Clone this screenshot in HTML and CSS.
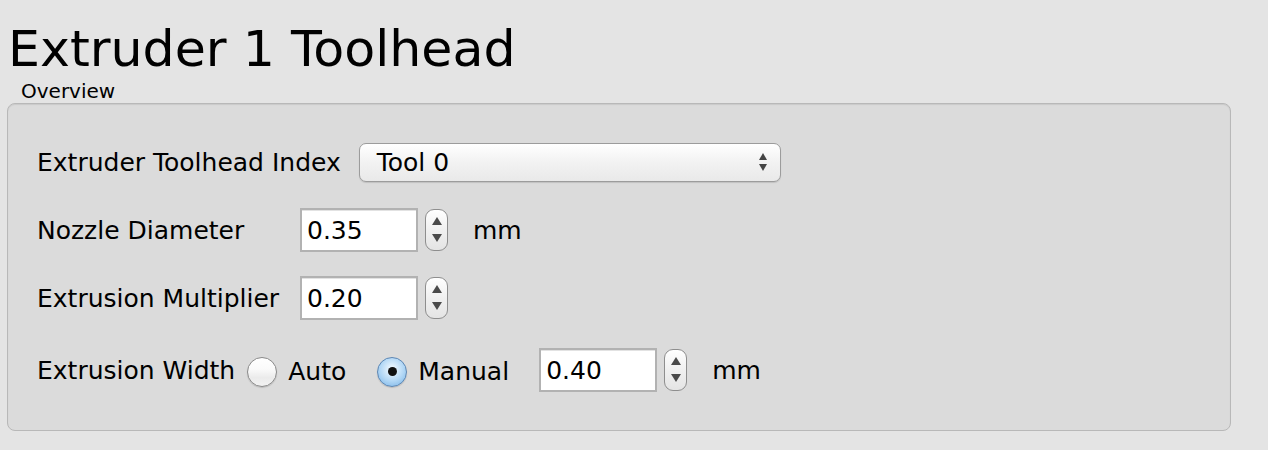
FILE: index.html
```html
<!doctype html>
<html lang="en">
<head>
  <title>Extruder 1 Toolhead</title>
  <link rel="stylesheet" href="styles.css">
</head>
<body>
  <h1 class="page-title">Extruder 1 Toolhead</h1>
  <section class="group">
    <div class="group-label">Overview</div>
    <div class="group-box">
      <div class="row">
        <label class="field-label">Extruder Toolhead Index</label>
        <div class="select">
          <span class="select-value">Tool 0</span>
          <span class="select-arrows"><i class="tri-up"></i><i class="tri-down"></i></span>
        </div>
      </div>
      <div class="row">
        <label class="field-label fixed">Nozzle Diameter</label>
        <input class="num" type="text" value="0.35">
        <span class="stepper"><i class="tri-up"></i><i class="tri-down"></i></span>
        <span class="unit">mm</span>
      </div>
      <div class="row">
        <label class="field-label fixed">Extrusion Multiplier</label>
        <input class="num" type="text" value="0.20">
        <span class="stepper"><i class="tri-up"></i><i class="tri-down"></i></span>
      </div>
      <div class="row last">
        <label class="field-label">Extrusion Width</label>
        <span class="radio"></span>
        <span class="radio-text">Auto</span>
        <span class="radio checked"></span>
        <span class="radio-text">Manual</span>
        <input class="num wide-gap" type="text" value="0.40">
        <span class="stepper"><i class="tri-up"></i><i class="tri-down"></i></span>
        <span class="unit">mm</span>
      </div>
    </div>
  </section>
</body>
</html>
```

FILE: styles.css
```css
html, body {
  margin: 0;
  padding: 0;
  background: #e4e4e4;
  font-family: "DejaVu Sans", "Liberation Sans", sans-serif;
  color: #000;
  height: 100%;
  overflow: hidden;
}
.page-title {
  margin: 0;
  padding: 17px 0 0 8px;
  font-size: 50.6px;
  font-weight: normal;
  line-height: 63px;
}
.group-label {
  padding-left: 21px;
  font-size: 20px;
  line-height: 22px;
}
.group-box {
  box-sizing: border-box;
  margin: 1px 0 0 7px;
  width: 1224px;
  height: 328px;
  padding: 36px 0 0 29px;
  background: #dbdbdb;
  border: 1px solid #b8b8b8;
  border-radius: 8px;
  box-shadow: inset 0 1px 1px rgba(0, 0, 0, 0.08);
  display: flex;
  flex-flow: column nowrap;
  gap: 24px;
}
.row {
  display: flex;
  flex-flow: row nowrap;
  align-items: center;
  height: 44px;
  font-size: 25px;
}
.row.last {
  margin-top: 4px;
}
.field-label {
  white-space: nowrap;
}
.field-label.fixed {
  width: 263px;
  flex: none;
}
.select {
  box-sizing: border-box;
  margin-left: 18px;
  width: 422px;
  height: 39px;
  display: flex;
  align-items: center;
  justify-content: space-between;
  padding: 0 13px 0 17px;
  border: 1px solid #9c9c9c;
  border-radius: 7px;
  background: linear-gradient(#ffffff, #f2f2f2 50%, #e9e9e9);
  box-shadow: 0 1px 1px rgba(0, 0, 0, 0.12);
}
.select-arrows {
  display: flex;
  flex-flow: column nowrap;
  gap: 4px;
}
i.tri-up, i.tri-down {
  display: block;
  width: 0;
  height: 0;
  border-left: 4.5px solid transparent;
  border-right: 4.5px solid transparent;
}
i.tri-up {
  border-bottom: 7px solid #444;
}
i.tri-down {
  border-top: 7px solid #444;
}
.num {
  box-sizing: border-box;
  width: 118px;
  height: 44px;
  margin: 0;
  padding: 0 0 0 5px;
  font-family: "DejaVu Sans", "Liberation Sans", sans-serif;
  font-size: 25px;
  color: #000;
  background: #fff;
  border: 2px solid #b2b2b2;
  border-radius: 0;
  box-shadow: inset 0 1px 0 #e2e2e2;
  outline: none;
}
.num.wide-gap {
  margin-left: 30px;
}
.stepper {
  box-sizing: border-box;
  margin-left: 7px;
  width: 23px;
  height: 42px;
  display: flex;
  flex-flow: column nowrap;
  align-items: center;
  justify-content: space-between;
  padding: 7px 0 8px;
  border: 1px solid #8e8e8e;
  border-radius: 9px;
  background: linear-gradient(#ffffff, #f0f0f0 50%, #e4e4e4);
}
.stepper i.tri-up, .stepper i.tri-down {
  border-left-width: 5.5px;
  border-right-width: 5.5px;
}
.stepper i.tri-up {
  border-bottom: 8px solid #4a4a4a;
}
.stepper i.tri-down {
  border-top: 8px solid #4a4a4a;
}
.unit {
  margin-left: 25px;
}
.radio {
  box-sizing: border-box;
  flex: none;
  width: 30px;
  height: 30px;
  margin: 3px 0 0 12px;
  border: 1px solid #8a8a8a;
  border-radius: 50%;
  background: linear-gradient(#ffffff, #fafafa 40%, #ebebeb 70%, #f2f2f2);
  box-shadow: 0 1px 1px rgba(0, 0, 0, 0.15);
  display: flex;
  align-items: center;
  justify-content: center;
}
.radio.checked {
  margin-left: 31px;
  border-color: #5d87b4;
  background: radial-gradient(circle at 50% 40%, #e4f2fd 15%, #b0d6f5 55%, #74b0e5);
}
.radio.checked::after {
  content: "";
  width: 9px;
  height: 9px;
  border-radius: 50%;
  background: #111;
}
.radio-text {
  margin: 3px 0 0 11px;
}
```
